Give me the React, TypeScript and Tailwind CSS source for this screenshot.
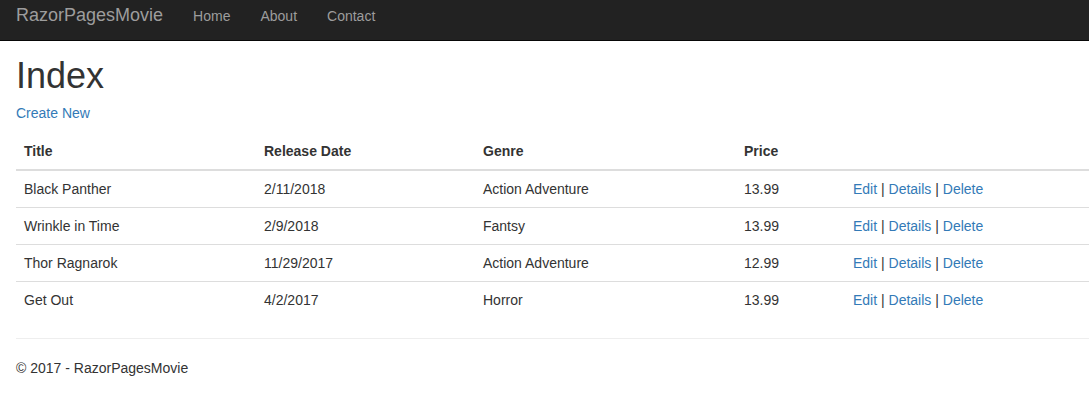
import React from "react";

const movies = [
  { title: "Black Panther", date: "2/11/2018", genre: "Action Adventure", price: "13.99" },
  { title: "Wrinkle in Time", date: "2/9/2018", genre: "Fantsy", price: "13.99" },
  { title: "Thor Ragnarok", date: "11/29/2017", genre: "Action Adventure", price: "12.99" },
  { title: "Get Out", date: "4/2/2017", genre: "Horror", price: "13.99" },
];

export default function App() {
  return (
    <div className="min-h-[415px] bg-white text-[14px] leading-[20px] text-[#333333] [font-family:'Liberation_Sans',Arial,sans-serif]">
      <nav className="h-[41px] bg-[#222222] border-b border-[#080808]">
        <div className="flex items-baseline pt-[5px] pl-[16px]">
          <a href="#" className="text-[18px] leading-[20px] text-[#9d9d9d]">RazorPagesMovie</a>
          <ul className="flex items-baseline ml-[15px]">
            {["Home", "About", "Contact"].map((l) => (
              <li key={l}>
                <a href="#" className="block px-[15px] text-[14px] leading-[20px] text-[#9d9d9d]">{l}</a>
              </li>
            ))}
          </ul>
        </div>
      </nav>
      <div className="pl-[16px]">
        <h1 className="mt-[15px] text-[36px] leading-[40px] font-normal text-[#333333]">Index</h1>
        <p className="mt-[7px] mb-[10px]">
          <a href="#" className="text-[#337ab7]">Create New</a>
        </p>
        <table className="w-full border-collapse table-fixed">
          <colgroup>
            <col className="w-[240px]" />
            <col className="w-[219px]" />
            <col className="w-[261px]" />
            <col className="w-[109px]" />
            <col />
          </colgroup>
          <thead>
            <tr>
              <th className="p-[8px] text-left font-bold border-b-2 border-[#dddddd]">Title</th>
              <th className="p-[8px] text-left font-bold border-b-2 border-[#dddddd]">Release Date</th>
              <th className="p-[8px] text-left font-bold border-b-2 border-[#dddddd]">Genre</th>
              <th className="p-[8px] text-left font-bold border-b-2 border-[#dddddd]">Price</th>
              <th className="p-[8px] border-b-2 border-[#dddddd]"></th>
            </tr>
          </thead>
          <tbody>
            {movies.map((m, i) => (
              <tr key={i}>
                <td className="p-[8px] border-t border-[#dddddd]">{m.title}</td>
                <td className="p-[8px] border-t border-[#dddddd]">{m.date}</td>
                <td className="p-[8px] border-t border-[#dddddd]">{m.genre}</td>
                <td className="p-[8px] border-t border-[#dddddd]">{m.price}</td>
                <td className="p-[8px] border-t border-[#dddddd]">
                  <a href="#" className="text-[#337ab7]">Edit</a> |{" "}
                  <a href="#" className="text-[#337ab7]">Details</a> |{" "}
                  <a href="#" className="text-[#337ab7]">Delete</a>
                </td>
              </tr>
            ))}
          </tbody>
        </table>
        <hr className="mt-[20px] mb-[19px] border-0 border-t border-[#eeeeee]" />
        <footer>
          <p>© 2017 - RazorPagesMovie</p>
        </footer>
      </div>
    </div>
  );
}
